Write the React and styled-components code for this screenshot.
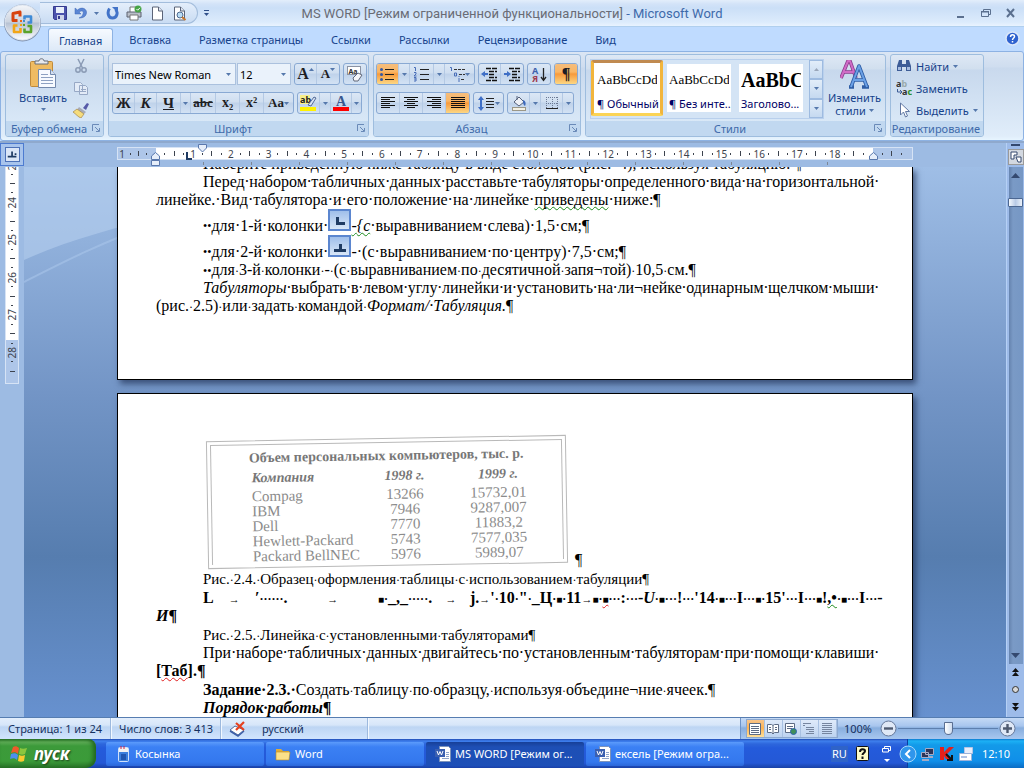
import React, { useState } from 'react';
import styled, { createGlobalStyle, css } from 'styled-components';

const GlobalStyle = createGlobalStyle`
  * {
    box-sizing: border-box;
  }

  body {
    margin: 0;
    overflow: hidden;
    font-family: 'Noto Sans', 'Open Sans', sans-serif;
    font-size: 11px;
    color: #15428b;
  }

  button {
    margin: 0;
    padding: 0;
    border: 0;
    background: none;
    font: inherit;
    color: inherit;
  }

  svg {
    display: block;
    flex: none;
  }
`;

const Wrapper = styled.div`
  display: flex;
  flex-direction: column;
  height: 100vh;
  background: #bfdbff;
`;

/* ---------- title bar ---------- */

const TitleBar = styled.header`
  display: grid;
  grid-template-columns: 1fr auto 1fr;
  align-items: center;
  height: 27px;
  flex: none;
  background: linear-gradient(#e3eefb 0, #d3e3f8 4px, #cbdff7 8px, #dcebfc 22px, #e9f3ff 26px);
  border-bottom: 1px solid #b0cfee;
`;

const QuickAccess = styled.div`
  display: flex;
  align-items: center;
  justify-self: start;
  gap: 7px;
  height: 22px;
  margin-left: 40px;
  padding: 0 10px 0 13px;
  border: 1px solid #a3bddc;
  border-left: 0;
  border-radius: 0 11px 11px 0;
  background: linear-gradient(#e4eefb, #c9dcf3);
`;

const QuickAccessArea = styled.div`
  display: flex;
  align-items: center;
  gap: 6px;
`;

const Title = styled.h1`
  margin: 0;
  font-family: Roboto, 'Noto Sans', sans-serif;
  font-size: 13px;
  font-weight: normal;
  white-space: nowrap;
  color: #3e6aaa;

  span {
    color: #696c75;
  }
`;

const WindowButtons = styled.div`
  display: flex;
  justify-self: end;
  align-items: center;
  gap: 14px;
  padding-right: 7px;
`;

const OfficeButton = styled.button`
  position: absolute;
  z-index: 2;
  top: 3px;
  left: 3px;
`;

/* ---------- tabs ---------- */

const Tabs = styled.nav`
  display: flex;
  align-items: flex-end;
  height: 24px;
  flex: none;
  padding: 0 4px 0 48px;
  background: #bfdbff;
`;

const Tab = styled.button`
  height: 23px;
  padding: 0 ${(p) => (p.$active ? '10px' : '14px')};
  margin-right: ${(p) => (p.$active ? '2px' : '0')};
  font-size: 11px;
  color: #15428b;

  ${(p) =>
    p.$active &&
    css`
      border: 1px solid #8db2e3;
      border-bottom: 0;
      border-radius: 3px 3px 0 0;
      background: linear-gradient(#f6faff, #dde9f7);
    `}
`;

const HelpButton = styled.button`
  margin: 0 0 5px auto;
`;

/* ---------- ribbon ---------- */

const Ribbon = styled.section`
  display: flex;
  gap: 4px;
  flex: none;
  height: 90px;
  padding: 2px 4px 3px;
  border: 1px solid #8db2e3;
  border-radius: 3px;
  background: linear-gradient(#dbe6f4 0, #cfddef 15px, #c9d9ed 16px, #e0edfa 84px, #e7f5ff 88px);
`;

const Group = styled.div`
  display: flex;
  flex-direction: column;
  width: ${(p) => p.$width}px;
  border: 1px solid #9ebdde;
  border-radius: 3px;
  background: linear-gradient(#dee8f5 0, #d1dfee 14px, #c7d8ed 15px, #d9e8f7 68px);
  overflow: hidden;
`;

const GroupBody = styled.div`
  display: flex;
  flex: 1;
  padding: ${(p) => p.$pad || '0'};
  gap: 3px;
`;

const GroupLabel = styled.div`
  display: flex;
  align-items: center;
  justify-content: center;
  height: 15px;
  padding-right: 2px;
  background: #c1d8f0;
  color: #3e6aaa;
  white-space: nowrap;

  span {
    flex: 1;
    text-align: center;
  }
`;

const Rows = styled.div`
  display: flex;
  flex-direction: column;
  gap: 7px;
`;

const Row = styled.div`
  display: flex;
  gap: 3px;
`;

const ComboPair = styled.div`
  display: flex;
  gap: 1px;
`;

const ToolGroup = styled.div`
  display: flex;
  height: 22px;
  border: 1px solid #89a9d3;
  border-radius: 3px;
  background: linear-gradient(#dbe7f5 0, #cfdef0 9px, #bfd2ea 10px, #d3e2f4 20px);
  overflow: hidden;
`;

const Tool = styled.button`
  display: flex;
  align-items: center;
  justify-content: center;
  width: ${(p) => p.$width || 22}px;
  border-right: 1px solid #b4c9e4;
  font-family: 'Liberation Serif', serif;
  font-size: ${(p) => p.$size || 14}px;
  font-weight: bold;
  line-height: 18px;
  color: #1e1e24;

  &:last-child {
    border-right: 0;
  }

  ${(p) =>
    p.$raised &&
    css`
      svg {
        align-self: flex-start;
        margin-top: 4px;
      }
    `}

  ${(p) =>
    p.$on &&
    css`
      background: linear-gradient(#f5bd7c 0, #f9b665 8px, #f79a3c 10px, #fdd783 20px);
    `}
`;

const BigButton = styled.button`
  display: flex;
  flex-direction: column;
  align-items: center;
  width: ${(p) => p.$width}px;
  padding-top: ${(p) => p.$top}px;
  line-height: 13px;

  > span {
    padding: 2px 0 4px;
  }
`;

const MenuLine = styled.i`
  display: flex;
  align-items: center;
  justify-content: center;
  gap: 3px;
  font-style: normal;
`;

const IconColumn = styled.div`
  display: flex;
  flex-direction: column;
  align-items: center;
  gap: 6px;
  padding-top: 3px;
  margin-left: -10px;
`;

const ComboBox = styled.label`
  display: flex;
  align-items: center;
  width: ${(p) => p.$width}px;
  height: 22px;
  padding-right: 4px;
  border: 1px solid #abc1de;
  background: #eaf2fb;

  select {
    flex: 1;
    min-width: 0;
    padding: 0 2px;
    border: 0;
    appearance: none;
    background: none;
    font: inherit;
    color: #000;
  }
`;

const Gallery = styled.div`
  display: flex;
  height: 60px;
  border: 1px solid #b9d0ed;
  background: #d4e4f5;
`;

const StyleTile = styled.button`
  display: flex;
  flex-direction: column;
  justify-content: space-between;
  width: 72px;
  height: 56px;
  padding: 7px 2px 0;
  border: 4px solid transparent;
  background: #fff;
  background-clip: padding-box;
  color: #000066;
  text-align: left;
  white-space: nowrap;
  overflow: hidden;

  b {
    display: flex;
    align-items: center;
    height: 18px;
    font-family: 'Liberation Serif', serif;
    font-size: ${(p) => (p.$heading ? '20px' : '13px')};
    font-weight: ${(p) => (p.$heading ? 'bold' : 'normal')};
    color: #000;
    overflow: hidden;
  }

  span {
    line-height: 16px;
  }

  ${(p) =>
    p.$on &&
    css`
      border: 3px solid #f2b53c;
      border-top-color: #c08a50;
      border-bottom-color: #fbd456;
      border-radius: 2px;
      padding: 8px 3px 1px;
    `}
`;

const GalleryScroll = styled.div`
  display: flex;
  flex-direction: column;
  width: 14px;
  margin-left: 2px;

  button {
    display: flex;
    flex: 1;
    align-items: center;
    justify-content: center;
    border: 1px solid #9ebbe0;
    background: linear-gradient(#e2edf9, #c5d9f0);
  }
`;

const EditList = styled.div`
  display: flex;
  flex-direction: column;
  gap: 4px;

  button {
    display: flex;
    align-items: center;
    gap: 4px;
    height: 18px;
    white-space: nowrap;
  }
`;

/* ---------- workspace ---------- */

const Workspace = styled.main`
  display: flex;
  flex: 1;
  min-height: 0;
  border-top: 2px solid #8fa9cd;
  background: #9dbbe3;
`;

const LeftRail = styled.div`
  display: flex;
  flex-direction: column;
  align-items: center;
  width: 24px;
  background: #9dbbe3;
`;

const TabSelector = styled.button`
  display: flex;
  align-items: center;
  justify-content: center;
  width: 24px;
  height: 23px;
  margin-bottom: 1px;
  border: 1px solid #4d7bd0;
  background: #a8c4ec;

  svg {
    border: 1px solid #4d72b8;
    background: #dbe6f7;
  }
`;

const VerticalRuler = styled.div`
  display: flex;
  flex-direction: column;
  width: 14px;
  height: 217px;
  padding-bottom: 7px;
  border: 1px solid #d6e3f5;
  border-top: 0;
  background: linear-gradient(#fff 173px, #aec6e9 173px);
  overflow: hidden;

  > :first-child {
    margin-top: -7px;
  }
`;

const Center = styled.div`
  display: flex;
  flex-direction: column;
  flex: 1;
  min-width: 0;
`;

const HorizontalRuler = styled.div`
  position: relative;
  width: 796px;
  height: 24px;
  margin: 0 auto;
  padding-top: 4px;
`;

const RulerBar = styled.div`
  display: flex;
  height: 13px;
  border: 1px solid #d6e3f5;
  background: #aec6e9;
`;

const RulerPart = styled.div`
  display: flex;
  flex: ${(p) => (p.$width ? `0 0 ${p.$width}px` : '1')};
  padding: ${(p) => p.$pad};
  background: ${(p) => (p.$page ? '#fff' : '#aec6e9')};
`;

const Mark = styled.span`
  display: flex;
  flex: 1 1 0;
  min-width: 0;
  min-height: 0;
  align-items: center;
  justify-content: center;
  font-size: 10px;
  line-height: 10px;
  color: #3d434e;
  white-space: nowrap;

  ${(p) =>
    p.$vertical &&
    css`
      writing-mode: vertical-rl;
      rotate: 180deg;
    `}
`;

const Tick = styled.i`
  width: ${(p) => (p.$vertical ? p.$size : 1)}px;
  height: ${(p) => (p.$vertical ? 1 : p.$size)}px;
  background: #3d434e;
`;

const TabStops = styled.div`
  height: 3px;
  margin: 2px 40px 0 86px;
  background: repeating-linear-gradient(90deg, #7d8796 0, #7d8796 1px, transparent 1px, transparent 48px);
`;

const Pin = styled.span`
  position: absolute;
  left: ${(p) => p.$x}px;
  top: ${(p) => p.$y}px;
`;

const Canvas = styled.div`
  position: relative;
  display: flex;
  flex-direction: column;
  align-items: center;
  flex: 1;
  gap: 13px;
  overflow: hidden;
  background: linear-gradient(#9fbee6 0, #7395c6 225px, #567daf 390px, #6791cf 550px);
`;

const Swoosh = styled.svg`
  position: absolute;
  top: 0;
  left: 0;
`;

const Page = styled.article`
  position: relative;
  width: 796px;
  height: ${(p) => p.$height};
  flex: ${(p) => (p.$height ? 'none' : '1')};
  padding: ${(p) => (p.$height ? '0 36px 0 38px' : '39px 36px 0 38px')};
  border: 1px solid #000;
  border-top-width: ${(p) => (p.$height ? '0' : '1px')};
  background: #fff;
  box-shadow: 3px 4px 6px rgba(20, 35, 70, 0.6);
  font-family: 'Liberation Serif', 'Times New Roman', serif;
  font-size: 16px;
  line-height: 18px;
  color: #000;
  white-space: nowrap;
`;

const Shift = styled.div`
  margin-top: -12px;
`;

const Paragraph = styled.p`
  margin: 0 0 ${(p) => (p.$spaced ? '1px' : '0')};
  font-size: ${(p) => (p.$caption ? '15px' : '16px')};
  font-weight: ${(p) => (p.$bold ? 'bold' : 'normal')};
`;

const Line = styled.span`
  display: flex;
  align-items: baseline;
  justify-content: ${(p) => (p.$justify ? 'space-between' : 'flex-start')};
  height: 18px;
  padding-left: ${(p) => (p.$indent ? '47px' : '0')};
  margin-right: ${(p) => (p.$justify ? '-3px' : '0')};
  white-space: pre;

  > * {
    flex: none;
  }
`;

const PictureLine = styled(Line)`
  align-items: flex-end;
  height: 26px;

  svg {
    align-self: flex-start;
  }
`;

const Dot = styled.span`
  font-size: 12px;
`;

const Square = styled.span`
  font-size: 10px;
`;

const Arrow = styled.span`
  font-size: 11px;
`;

const Bullets = styled.span`
  font-size: 12px;
`;

const FlexDot = styled.span`
  display: flex;
  justify-content: center;
  flex: 0 1 auto !important;
  min-width: 0;
`;

const Wavy = styled.span`
  text-decoration: underline wavy ${(p) => p.$color || '#1c8a1c'} 1px;
  text-decoration-skip-ink: none;
`;

const TabCell = styled.span`
  display: flex;
  align-items: baseline;
  width: ${(p) => p.$width}px;

  > :last-child {
    flex: 1;
    text-align: center;
  }
`;

const Figure = styled.div`
  display: flex;
  align-items: flex-end;
  gap: 8px;
  height: 136px;
  padding-left: 51px;
  margin-bottom: 1px;
`;

const Scan = styled.div`
  width: 360px;
  height: 128px;
  margin-bottom: 3px;
  padding: 3px;
  border: 1px solid #b9b9b9;
  rotate: -1deg;
`;

const ScanTable = styled.table`
  width: 100%;
  border: 1px solid #b9b9b9;
  border-bottom: 0;
  border-collapse: separate;
  border-spacing: 0;
  table-layout: fixed;
  font-size: 15px;
  line-height: 15px;
  color: #8b8b8b;

  caption {
    padding: 6px 0 0;
    margin-bottom: -21px;
    font-size: 14px;
    font-weight: bold;
    color: #777;
  }

  th,
  td {
    padding: 0;
    font-weight: normal;
    text-align: center;
  }

  th:first-child {
    width: 163px;
    padding-left: 40px;
    text-align: left;
  }

  thead th {
    width: 60px;
    padding-top: 25px;
    padding-bottom: 4px;
    font-size: 14px;
    font-weight: bold;
    font-style: italic;
    color: #777;
  }

  thead th:last-child {
    width: auto;
  }
`;

const ScrollBar = styled.div`
  display: flex;
  flex-direction: column;
  align-items: center;
  width: 18px;
  border-left: 1px solid #b5d0f5;
  background: #9dbbe9;
`;

const ScrollTrack = styled.div`
  display: flex;
  flex-direction: column;
  align-items: center;
  flex: 1;
  width: 14px;
  margin-bottom: 4px;
  padding: 6px 0;
  background: linear-gradient(90deg, #6583ae, #7a9ac6 4px, #7697c4);
`;

const ScrollThumb = styled.div`
  width: 15px;
  height: 9px;
  margin: 20px 0 auto;
  border: 1px solid #4c6791;
  border-radius: 1px;
  background: linear-gradient(90deg, #f4f8fd, #b9cbe6, #eaf1fa);
`;

const RulerToggle = styled.button`
  display: flex;
  align-items: center;
  justify-content: center;
  width: 16px;
  height: 16px;
  margin: 2px 0;
  border: 1px solid #9a9a9a;
  background: #d3d8e0;
`;

const BrowseButtons = styled.div`
  display: flex;
  flex-direction: column;
  align-items: center;
  gap: 8px;
  padding-bottom: 6px;
`;

/* ---------- status bar ---------- */

const StatusBar = styled.footer`
  display: flex;
  align-items: stretch;
  height: 22px;
  flex: none;
  border-top: 1px solid #567db1;
  background: linear-gradient(#e3eefc 0, #d7e6f9 7px, #bdd5f3 9px, #cfe3fd 20px);
  color: #15315f;
  white-space: nowrap;
`;

const StatusItem = styled.span`
  display: flex;
  align-items: center;
  gap: 16px;
  padding: 0 8px;
  border-right: 1px solid #9db9de;
  box-shadow: 1px 0 #f2f8ff;
  width: ${(p) => p.$width}px;
`;

const StatusRight = styled.div`
  display: flex;
  align-items: center;
  gap: 6px;
  margin-left: auto;
  padding: 0 8px 0 5px;
  border-left: 1px solid #6f94c8;
  background: linear-gradient(#c5daf5 0, #a8c6ee 8px, #88aede 10px, #a5c5ee 20px);
`;

const ViewButtons = styled.div`
  display: flex;
  height: 19px;
  border: 1px solid #8ca8cf;
  background: linear-gradient(#dfeafa, #bdd3f0);

  button {
    display: flex;
    align-items: center;
    justify-content: center;
    width: 18px;
    border-right: 1px solid #a9c1e2;
  }

  button:first-child {
    background: linear-gradient(#f8c48a, #fdb353 8px, #ffe09a);
  }
`;

const Zoom = styled.label`
  display: flex;
  align-items: center;
  gap: 8px;
`;

const ZoomSlider = styled.input`
  width: 100px;
  height: 16px;
  margin: 0 -7px;
  appearance: none;
  background: linear-gradient(#5d7fae, #5d7fae) center / 100% 1px no-repeat;

  &::-webkit-slider-thumb {
    appearance: none;
    width: 9px;
    height: 13px;
    border: 1px solid #5b6f92;
    border-radius: 1px 1px 5px 5px;
    background: linear-gradient(90deg, #fff, #cfdcee);
  }
`;

/* ---------- taskbar ---------- */

const TaskBar = styled.div`
  display: flex;
  align-items: center;
  height: 29px;
  flex: none;
  background: linear-gradient(#1f4bb4 0, #3f80ee 2px, #2d66dc 5px, #245bdb 9px, #2458d6 24px, #1941a5 29px);
  color: #fff;
  font-size: 11px;
`;

const StartButton = styled.button`
  display: flex;
  align-items: center;
  gap: 5px;
  width: 96px;
  height: 29px;
  margin-right: 10px;
  padding-left: 10px;
  border-radius: 0 8px 10px 0;
  background: linear-gradient(#2c7a2b 0, #5eac56 3px, #3c9a3a 7px, #3b9b39 22px, #2a752a 29px);
  box-shadow: inset -3px 0 4px #22661f;
  color: #fff;
  font-size: 17px;
  font-weight: bold;
  font-style: italic;
  text-shadow: 1px 1px 2px #1b3c1a;
`;

const TaskButton = styled.button`
  display: flex;
  align-items: center;
  gap: 4px;
  flex: 0 1 158px;
  min-width: 0;
  height: 24px;
  margin-right: 2px;
  padding: 0 9px;
  border-radius: 2px;
  background: ${(p) =>
    p.$on ? 'linear-gradient(#173f97, #1e4fb5 5px, #1d4fb7)' : 'linear-gradient(#5c9bfb, #3b80f4 5px, #3478ee 20px, #2b67d9)'};
  white-space: nowrap;
`;

const Language = styled.span`
  margin-left: auto;
  padding: 0 1px;
  background: #2f63c8;
  line-height: 16px;
`;

const TrayTools = styled.div`
  display: flex;
  align-items: center;
  gap: 13px;
  padding: 0 16px 0 8px;
`;

const Tray = styled.div`
  display: flex;
  align-items: center;
  gap: 3px;
  height: 29px;
  padding-right: 14px;
  border-left: 1px solid #0a3fa0;
  background: linear-gradient(#0d79cf 0, #1cb1f5 2px, #139ae9 6px, #108fe9 22px, #0b6cc4 29px);

  > button {
    margin-left: -9px;
  }

  time {
    padding-left: 5px;
  }
`;

/* ---------- icons ---------- */

function Svg({ w = 16, h = 16, children, ...rest }) {
  return (
    <svg width={w} height={h} viewBox={`0 0 ${w} ${h}`} aria-hidden="true" {...rest}>
      {children}
    </svg>
  );
}

function Caret({ color = '#5578ac', up }) {
  return (
    <Svg w={5} h={3}>
      <path d={up ? 'M0 3h5L2.500 0z' : 'M0 0h5L2.500 3z'} fill={color} />
    </Svg>
  );
}

function Launcher() {
  return (
    <Svg w={9} h={9} fill="none" stroke="#6a8ab8">
      <path d="M.5 7V.5H7M3 3l4 4M4 7.500h3.500V4" />
    </Svg>
  );
}

function OfficeLogo() {
  return (
    <Svg w={40} h={40}>
      <defs>
        <linearGradient id="orb" x1="0" y1="0" x2="0" y2="1">
          <stop offset="0" stopColor="#f4f6fa" />
          <stop offset=".48" stopColor="#ccd4e0" />
          <stop offset=".52" stopColor="#b7c2d3" />
          <stop offset="1" stopColor="#fdfdff" />
        </linearGradient>
      </defs>
      <circle cx="19.500" cy="20" r="18.500" fill="#8193b0" />
      <circle cx="19.500" cy="19.500" r="17.500" fill="url(#orb)" stroke="#dfe6f0" />
      <g fill="none" strokeLinejoin="round">
        <path d="M14.500 17.500H10V10.500l7-1.500v4.500" stroke="#d8430e" strokeWidth="3" />
        <path d="M21.500 16.500v-3h6.500v6h-3.500" stroke="#3f8bd6" strokeWidth="2.600" />
        <path d="M14.500 22.500H11V29h6.500v-4" stroke="#f2a516" strokeWidth="2.600" />
        <path d="M21.500 25.500V29H28v-6h-3.500" stroke="#5ba32b" strokeWidth="2.600" />
      </g>
      <g fill="#e8671a">
        <rect x="17" y="17" width="2" height="2" />
        <rect x="20" y="17" width="2" height="2" fill="#3f8bd6" />
        <rect x="17" y="21" width="2" height="2" fill="#f2a516" />
        <rect x="20" y="21" width="2" height="2" fill="#5ba32b" />
      </g>
    </Svg>
  );
}

function SaveIcon() {
  return (
    <Svg w={14} h={14}>
      <path d="M.5.5h13v13h-12l-1-1z" fill="#4b52ad" stroke="#353a8e" />
      <rect x="3" y="1" width="8" height="6" fill="#e9effa" />
      <rect x="4" y="9" width="7" height="5" fill="#cdd3ea" />
      <rect x="5" y="10" width="2" height="3" fill="#353a8e" />
    </Svg>
  );
}

function UndoIcon() {
  return (
    <Svg w={13} h={14}>
      <path d="M1 2v6h6L5 6c3-2 5-1 4 2-.5 2-2 3-4 4 5 0 7-2 7.500-5C13 3 8 0 3.500 4z" fill="#5b86d4" stroke="#3f67b5" strokeWidth=".5" />
    </Svg>
  );
}

function RedoIcon() {
  return (
    <Svg w={13} h={14}>
      <path d="M3.500 2.500C1 6 2 12 6.500 12s6-6 3-8.500" fill="none" stroke="#4273c8" strokeWidth="3" />
      <path d="M6 1h6v6z" fill="#4273c8" />
    </Svg>
  );
}

function PrintIcon() {
  return (
    <Svg w={17} h={16}>
      <path d="M4 7V2h7v5" fill="#fff" stroke="#777" />
      <path d="M1 7h14v5H1z" fill="#b9bec8" stroke="#5d6270" />
      <path d="M4 10h8v5H4z" fill="#fff" stroke="#777" />
      <circle cx="12" cy="4" r="3.500" fill="#48a546" />
      <path d="M10.500 4l1.200 1.200L14 2.800" stroke="#fff" fill="none" />
    </Svg>
  );
}

function PageIcon({ lens }) {
  return (
    <Svg w={15} h={15}>
      <path d="M2.500 1h6l4 4v9h-10z" fill="#fff" stroke="#5b6478" />
      <path d="M8.500 1v4h4" fill="#dfe6f2" stroke="#5b6478" />
      {lens && (
        <g>
          <circle cx="8" cy="9" r="3" fill="#b9dcf5" stroke="#4f6a90" />
          <path d="M10 11l3.500 3" stroke="#c5762c" strokeWidth="2" />
        </g>
      )}
    </Svg>
  );
}

function PasteIcon() {
  return (
    <Svg w={28} h={31}>
      <rect x="1.500" y="3.500" width="22" height="25" rx="1" fill="#efbb62" stroke="#c08a3a" />
      <path d="M6 6V3h4c0-3 5-3 5 0h4v3z" fill="#e7e9ee" stroke="#666c78" />
      <path d="M9.500 11.500h12l5 5v13h-17z" fill="#f7faff" stroke="#7389ad" />
      <path d="M21.500 11.500v5h5" fill="#d5e0f1" stroke="#7389ad" />
      <path d="M12 16.500h7M12 19.500h12M12 22.500h12M12 25.500h12" stroke="#8ea1c2" />
    </Svg>
  );
}

function CutIcon() {
  return (
    <Svg fill="none" stroke="#8b9bb5">
      <path d="M5 1l4.500 9M11 1L6.500 10" strokeWidth="1.500" />
      <circle cx="5" cy="12" r="2.200" strokeWidth="1.500" />
      <circle cx="11" cy="12" r="2.200" strokeWidth="1.500" />
    </Svg>
  );
}

function CopyIcon() {
  return (
    <Svg stroke="#97a8c5" fill="#e3ebf7">
      <path d="M1.500 2.500h6l2 2v7h-8zM6.500 5.500h6l2 2v7h-8z" />
      <path d="M8 9.500h5M8 11.500h5" />
    </Svg>
  );
}

function BrushIcon() {
  return (
    <Svg>
      <path d="M10 6l4-5 2 1-3 6z" fill="#565aa8" />
      <path d="M6 5l7 5-2 2-7-4z" fill="#a7abb8" />
      <path d="M4 7l7 5-3 4C5 15 3 12 0 10z" fill="#f5dc7c" stroke="#a3854a" strokeWidth=".7" />
    </Svg>
  );
}

function EraserIcon() {
  return (
    <Svg w={18}>
      <rect x="1.500" y=".5" width="13" height="8" fill="#fff" stroke="#8c94a4" />
      <text x="2.500" y="7.500" fontSize="7" fontWeight="bold" fontFamily="Noto Sans" fill="#333">
        Aa
      </text>
      <path d="M7 12l5-5 4 2-4 6H8z" fill="#f5f6fa" stroke="#60687a" />
    </Svg>
  );
}

function LinesIcon({ rows, color = '#111' }) {
  return (
    <Svg w={14} h={14} stroke={color}>
      {rows.map(([from, to], i) => (
        <path key={i} d={`M${from} ${i * 2 + 1.5}H${to}`} />
      ))}
    </Svg>
  );
}

const alignments = {
  'По левому краю': [[0, 14], [0, 9], [0, 14], [0, 9], [0, 14], [0, 9]],
  'По центру': [[0, 14], [3, 11], [0, 14], [3, 11], [0, 14], [3, 11]],
  'По правому краю': [[0, 14], [5, 14], [0, 14], [5, 14], [0, 14], [5, 14]],
  'По ширине': [[0, 14], [0, 14], [0, 14], [0, 14], [0, 14], [0, 14]],
};

function ListIcon({ kind }) {
  return (
    <Svg w={15} h={15}>
      {kind === 'bullets' && (
        <g>
          <g fill="#3559a5">
            <circle cx="1.500" cy="2.500" r="1.500" />
            <circle cx="1.500" cy="7.500" r="1.500" />
            <circle cx="1.500" cy="12.500" r="1.500" />
          </g>
          <path d="M5 2.500h9M5 7.500h9M5 12.500h9" stroke="#222" />
        </g>
      )}
      {kind === 'numbers' && (
        <g>
          <path d="M0 .5h1.500V4M0 5.500h2v1.500L0 9h2.500M0 10.500h2V14H0M0 12h2" fill="none" stroke="#4a6fb8" />
          <path d="M6 2.500h9M6 7.500h9M6 12.500h9" stroke="#222" />
        </g>
      )}
      {kind === 'levels' && (
        <g>
          <path d="M0 .5h1.500V4M4.500 6h2v3h-2zM9 11v4M9 9v1" fill="none" stroke="#4a6fb8" />
          <path d="M4 2.500h11M9 7.500h6M11 12.500h4" stroke="#333" strokeDasharray="3 1" />
        </g>
      )}
    </Svg>
  );
}

function IndentIcon({ right }) {
  return (
    <Svg w={17} h={15}>
      <path d="M5 1.500h11M8 4.500h8M8 7.500h5M8 10.500h8M5 13.500h11" stroke="#111" strokeWidth="1.500" strokeDasharray="5 1" />
      <path d={right ? 'M7 7L3 4v2H0v2h3v2z' : 'M0 7l4-3v2h3v2H4v2z'} fill="#3f6fc6" />
    </Svg>
  );
}

function SortIcon() {
  return (
    <Svg w={15} h={17}>
      <text x="0" y="8" fontSize="9" fontWeight="bold" fontFamily="Noto Sans" fill="#3d62ad">
        A
      </text>
      <text x="0" y="16" fontSize="9" fontWeight="bold" fontFamily="Noto Sans" fill="#a03c50">
        Я
      </text>
      <path d="M11.500 2v12M9 11l2.500 3.500L14 11" fill="none" stroke="#222" strokeWidth="1.300" />
    </Svg>
  );
}

function SpacingIcon() {
  return (
    <Svg w={17} h={15}>
      <path d="M3 0L0 4h2v7H0l3 4 3-4H4V4h2z" fill="#3f6fc6" />
      <path d="M8 2.500h8M8 5.500h8M8 8.500h8M8 11.500h8" stroke="#222" />
    </Svg>
  );
}

function BucketIcon() {
  return (
    <Svg>
      <path d="M3 7l5-5 5 5-5 4z" fill="#eef1f7" stroke="#55607a" />
      <path d="M6 5V1" stroke="#55607a" />
      <path d="M12 5c3 1 3 4 2 6-2-1-2-4-2-6z" fill="#3c69bb" />
      <rect x="1.500" y="12.500" width="13" height="3" fill="#f3f0e4" stroke="#9b9787" />
    </Svg>
  );
}

function BorderIcon() {
  return (
    <Svg w={14} h={14} fill="none" stroke="#6c7a94">
      <path d="M1.500 1v12M7.500 1v12M12.500 1v12M1 1.500h12M1 7.500h12" strokeDasharray="1 1" />
      <path d="M1 12.500h12" stroke="#222" />
    </Svg>
  );
}

function HighlightIcon() {
  return (
    <Svg w={17}>
      <rect x="0" y="0" width="10" height="9" fill="#f7f08a" />
      <text x="0" y="8" fontSize="9" fontFamily="Noto Sans" fill="#222">
        ab
      </text>
      <path d="M8 10l6-8 2 1-5 8z" fill="#d8e3f5" stroke="#536b97" />
      <rect x="0" y="12" width="16" height="4" fill="#fff200" />
    </Svg>
  );
}

function FontColorIcon() {
  return (
    <Svg>
      <text x="3" y="11" fontSize="14" fontWeight="bold" fontFamily="Liberation Serif" fill="#39578f">
        A
      </text>
      <rect x="0" y="12" width="16" height="4" fill="#f00" />
    </Svg>
  );
}

function StylesIcon() {
  return (
    <Svg w={30} h={29} strokeLinejoin="round">
      <path d="M1 18L8 1h2l6 17M4 12h9" fill="none" stroke="#8c3b8f" strokeWidth="3.600" />
      <path d="M1 18L8 1h2l6 17M4 12h9" fill="none" stroke="#cf6cc6" strokeWidth="2" />
      <path d="M11 27l8-21 8 21M14 20h10M9 27h5M22 27h7" fill="none" stroke="#2e5da5" strokeWidth="3.600" />
      <path d="M11 27l8-21 8 21M14 20h10" fill="none" stroke="#6ba1e6" strokeWidth="2" />
    </Svg>
  );
}

function FindIcon() {
  return (
    <Svg>
      <path d="M1 13V8l2-6h3v4h4V2h3l2 6v5h-5V9H6v4z" fill="#3e5d97" />
      <path d="M2 9h3v3H2zM11 9h3v3h-3z" fill="#a9bfe2" />
    </Svg>
  );
}

function ReplaceIcon() {
  return (
    <Svg fontFamily="Noto Sans" fontWeight="bold" fontSize="9">
      <text x="0" y="7" fill="#333">
        a<tspan fill="#9aa">b</tspan>
      </text>
      <text x="6" y="15" fill="#333">
        a<tspan fill="#2a8f2a">c</tspan>
      </text>
      <path d="M1.500 9v3h4M4 10l2 2-2 2" fill="none" stroke="#3e5d97" />
    </Svg>
  );
}

function CursorIcon() {
  return (
    <Svg>
      <path d="M4.500 1v12l3-3 2 5 2-1-2-4.500h4z" fill="#fff" stroke="#6278a3" />
    </Svg>
  );
}

function TabMark({ kind = 'left' }) {
  return (
    <Svg w={15} h={15}>
      <path
        d={kind === 'decimal' ? 'M2 9h10v2H2zM6 4h2v5H6zM10 6h2v2h-2z' : 'M3 3h2v6h4v2H3z'}
        fill="#1f3b63"
      />
    </Svg>
  );
}

function TabPicture({ center }) {
  return (
    <Svg w={23} h={22}>
      <defs>
        <linearGradient id="tabpic" x1="0" y1="0" x2="0" y2="1">
          <stop offset="0" stopColor="#9dbdea" />
          <stop offset="1" stopColor="#dbe8f8" />
        </linearGradient>
      </defs>
      <rect x="1" y="1" width="21" height="20" fill="url(#tabpic)" stroke="#5b86cf" strokeWidth="2" />
      <path d={center ? 'M6 14h12v3H6zM11 9h3v5h-3z' : 'M8 8h3v5h6v3H8z'} fill="#1f3b63" />
    </Svg>
  );
}

function IndentMark({ kind }) {
  const stroke = '#5a78ad';
  if (kind === 'first') {
    return (
      <Svg w={9} h={9}>
        <path d="M.5.5h8V4l-4 4-4-4z" fill="#e6eefa" stroke={stroke} />
      </Svg>
    );
  }
  return (
    <Svg w={9} h={14}>
      <path d="M.5 7.500V4l4-3.500 4 3.500v3.500z" fill="#e6eefa" stroke={stroke} />
      {kind === 'left' && <path d="M.5 8.500h8v5h-8z" fill="#e6eefa" stroke={stroke} />}
    </Svg>
  );
}

function WordIcon() {
  return (
    <Svg>
      <path d="M4.500.5h9l2 2v13h-11z" fill="#fff" stroke="#7d93bb" />
      <path d="M11 6.500h3M11 8.500h3M11 10.500h3M7 12.500h7" stroke="#8da4cd" />
      <rect x="0" y="3" width="10" height="8" fill="#3a5fb0" />
      <path d="M2 5l1.500 4L5 5.500 6.500 9 8 5" fill="none" stroke="#fff" />
    </Svg>
  );
}

function RoundSign({ plus }) {
  return (
    <Svg w={17} h={17}>
      <circle cx="8.500" cy="8.500" r="7.500" fill="#dfe8f6" stroke="#67799a" />
      <path d={plus ? 'M4 8.500h9M8.500 4v9' : 'M4 8.500h9'} stroke="#4e5a70" strokeWidth="2.400" />
    </Svg>
  );
}

/* ---------- ruler ---------- */

function rulerMarks(from, to, vertical) {
  const marks = [];
  for (let q = from; q <= to; q++) {
    const rest = Math.abs(q % 4);
    marks.push(
      <Mark key={q} $vertical={vertical && rest === 0}>
        {rest === 0 ? Math.abs(q / 4) : <Tick $vertical={vertical} $size={rest === 2 ? 5 : 2} />}
      </Mark>
    );
  }
  return marks;
}

/* ---------- text ---------- */

// spreads the words and the visible spaces over the whole line
function Justified({ text, lead, indent }) {
  return (
    <Line $justify $indent={indent}>
      {lead}
      {text.split(/(·)/).filter(Boolean).map((part, i) =>
        part === '·' ? <FlexDot key={i}>·</FlexDot> : <span key={i}>{part}</span>
      )}
    </Line>
  );
}

const markKinds = { '·': Dot, '■': Square, '→': Arrow };

// formatting marks are drawn smaller than the letters round them
function Marks({ children }) {
  return (
    <span>
      {children.split(/([·■→])/).map((part, i) => {
        const Kind = markKinds[part];
        return Kind ? <Kind key={i}>{part}</Kind> : part;
      })}
    </span>
  );
}

const rows = [
  ['Compag', '13266', '15732,01'],
  ['IBM', '7946', '9287,007'],
  ['Dell', '7770', '11883,2'],
  ['Hewlett-Packard', '5743', '7577,035'],
  ['Packard BellNEC', '5976', '5989,07'],
];

const tabs = ['Главная', 'Вставка', 'Разметка страницы', 'Ссылки', 'Рассылки', 'Рецензирование', 'Вид'];

const galleryStyles = [
  { sample: 'AaBbCcDd', name: '¶ Обычный' },
  { sample: 'AaBbCcDd', name: '¶ Без инте...' },
  { sample: 'AaBbC', name: 'Заголово...', heading: true },
];

function RibbonGroup({ label, width, pad, launcher, children }) {
  return (
    <Group $width={width}>
      <GroupBody $pad={pad}>{children}</GroupBody>
      <GroupLabel>
        <span>{label}</span>
        {launcher && <Launcher />}
      </GroupLabel>
    </Group>
  );
}

function CaretTool({ label, width = 11 }) {
  return (
    <Tool aria-label={label} $width={width}>
      <Caret />
    </Tool>
  );
}

function App() {
  const [tab, setTab] = useState('Главная');
  const [style, setStyle] = useState(0);
  const [align, setAlign] = useState('По ширине');
  const [zoom, setZoom] = useState(50);

  return (
    <Wrapper>
      <GlobalStyle />
      <OfficeButton aria-label="Office">
        <OfficeLogo />
      </OfficeButton>

      <TitleBar>
        <QuickAccessArea>
          <QuickAccess>
            <button aria-label="Сохранить"><SaveIcon /></button>
            <button aria-label="Отменить"><UndoIcon /></button>
            <Caret />
            <button aria-label="Повторить"><RedoIcon /></button>
            <button aria-label="Печать"><PrintIcon /></button>
            <button aria-label="Создать"><PageIcon /></button>
            <button aria-label="Просмотр"><PageIcon lens /></button>
          </QuickAccess>
          <button aria-label="Настройка панели">
            <Svg w={5} h={7}>
              <path d="M0 .5h5" stroke="#2f4f8a" />
              <path d="M0 3h5L2.500 6z" fill="#2f4f8a" />
            </Svg>
          </button>
        </QuickAccessArea>
        <Title>
          <span>MS WORD [Режим ограниченной функциональности]</span> - Microsoft Word
        </Title>
        <WindowButtons>
          <button aria-label="Свернуть">
            <Svg w={11} h={11}><path d="M2 9h7" stroke="#5b708f" strokeWidth="2" /></Svg>
          </button>
          <button aria-label="Восстановить">
            <Svg w={11} h={11} fill="none" stroke="#5b708f">
              <path d="M3.500 3V1.500h7v5H9M1.500 4h7v4.500h-7zM1 3.500h8" />
            </Svg>
          </button>
          <button aria-label="Закрыть">
            <Svg w={12} h={11}><path d="M2 1l7 8M9 1L2 9" stroke="#5b708f" strokeWidth="2" /></Svg>
          </button>
        </WindowButtons>
      </TitleBar>

      <Tabs>
        {tabs.map((name) => (
          <Tab key={name} $active={name === tab} onClick={() => setTab(name)}>
            {name}
          </Tab>
        ))}
        <HelpButton aria-label="Справка">
          <Svg w={15} h={15}>
            <circle cx="7.500" cy="7.500" r="6.500" fill="#2f62cf" stroke="#dbe6f8" strokeWidth="1.500" />
            <path d="M5.500 6c0-3 4-3 4-.5 0 1.500-2 1.500-2 3.500M7.500 10v1.500" fill="none" stroke="#fff" strokeWidth="1.500" />
          </Svg>
        </HelpButton>
      </Tabs>

      <Ribbon>
        <RibbonGroup label="Буфер обмена" width={99} launcher>
          <BigButton $width={74} $top={3}>
            <PasteIcon />
            <span>Вставить</span>
            <Caret />
          </BigButton>
          <IconColumn>
            <button aria-label="Вырезать"><CutIcon /></button>
            <button aria-label="Копировать"><CopyIcon /></button>
            <button aria-label="Формат по образцу"><BrushIcon /></button>
          </IconColumn>
        </RibbonGroup>

        <RibbonGroup label="Шрифт" width={261} pad="8px 3px 0" launcher>
          <Rows>
            <Row>
              <ComboPair>
                <ComboBox $width={124}>
                  <select aria-label="Шрифт" defaultValue="Times New Roman">
                    <option>Times New Roman</option>
                    <option>Arial</option>
                  </select>
                  <Caret />
                </ComboBox>
                <ComboBox $width={54}>
                  <select aria-label="Размер шрифта" defaultValue="12">
                    <option>12</option>
                    <option>14</option>
                  </select>
                  <Caret />
                </ComboBox>
              </ComboPair>
              <ToolGroup>
                <Tool aria-label="Увеличить размер" $raised $size={16}>A<Caret up /></Tool>
                <Tool aria-label="Уменьшить размер" $raised $size={13}>A<Caret /></Tool>
              </ToolGroup>
              <ToolGroup>
                <Tool aria-label="Очистить формат"><EraserIcon /></Tool>
              </ToolGroup>
            </Row>
            <Row>
              <ToolGroup>
                <Tool $width={22} $size={15}>Ж</Tool>
                <Tool $width={22} $size={15}><i>К</i></Tool>
                <Tool $width={24} $size={15}><u>Ч</u></Tool>
                <CaretTool label="Подчёркивание" width={10} />
                <Tool $width={25} $size={13}><s>abc</s></Tool>
                <Tool $width={24}>x₂</Tool>
                <Tool $width={24}>x²</Tool>
                <Tool $width={29} $size={13}>Aa<Caret /></Tool>
              </ToolGroup>
              <ToolGroup>
                <Tool aria-label="Цвет выделения" $width={22}><HighlightIcon /></Tool>
                <CaretTool label="Выбор цвета выделения" />
                <Tool aria-label="Цвет текста" $width={21}><FontColorIcon /></Tool>
                <CaretTool label="Выбор цвета текста" width={9} />
              </ToolGroup>
            </Row>
          </Rows>
        </RibbonGroup>

        <RibbonGroup label="Абзац" width={208} pad="8px 2px 0" launcher>
          <Rows>
            <Row>
              <ToolGroup>
                <Tool aria-label="Маркеры" $on><ListIcon kind="bullets" /></Tool>
                <CaretTool label="Виды маркеров" />
                <Tool aria-label="Нумерация" $width={24}><ListIcon kind="numbers" /></Tool>
                <CaretTool label="Виды нумерации" />
                <Tool aria-label="Многоуровневый список" $width={29}>
                  <ListIcon kind="levels" />
                  <Caret />
                </Tool>
              </ToolGroup>
              <ToolGroup>
                <Tool aria-label="Уменьшить отступ"><IndentIcon /></Tool>
                <Tool aria-label="Увеличить отступ" $width={22}><IndentIcon right /></Tool>
              </ToolGroup>
              <ToolGroup>
                <Tool aria-label="Сортировка"><SortIcon /></Tool>
              </ToolGroup>
              <ToolGroup>
                <Tool $on $size={16}>¶</Tool>
              </ToolGroup>
            </Row>
            <Row>
              <ToolGroup>
                {Object.keys(alignments).map((name) => (
                  <Tool key={name} aria-label={name} $width={23} $on={name === align} onClick={() => setAlign(name)}>
                    <LinesIcon rows={alignments[name]} />
                  </Tool>
                ))}
              </ToolGroup>
              <ToolGroup>
                <Tool aria-label="Междустрочный интервал" $width={29}>
                  <SpacingIcon />
                  <Caret />
                </Tool>
              </ToolGroup>
              <ToolGroup>
                <Tool aria-label="Заливка"><BucketIcon /></Tool>
                <CaretTool label="Цвет заливки" />
                <Tool aria-label="Границы"><BorderIcon /></Tool>
                <CaretTool label="Виды границ" width={10} />
              </ToolGroup>
            </Row>
          </Rows>
        </RibbonGroup>

        <RibbonGroup label="Стили" width={301} pad="4px 3px 0 4px" launcher>
          <Gallery>
            {galleryStyles.map((item, i) => (
              <StyleTile key={item.name} $on={i === style} $heading={item.heading} onClick={() => setStyle(i)}>
                <b>{item.sample}</b>
                <span>{item.name}</span>
              </StyleTile>
            ))}
            <GalleryScroll>
              <button aria-label="Вверх"><Caret up color="#9aa7ba" /></button>
              <button aria-label="Вниз"><Caret /></button>
              <button aria-label="Дополнительно"><Caret /></button>
            </GalleryScroll>
          </Gallery>
          <BigButton $width={58} $top={1}>
            <StylesIcon />
            <span>
              Изменить
              <MenuLine>
                стили
                <Caret />
              </MenuLine>
            </span>
          </BigButton>
        </RibbonGroup>

        <RibbonGroup label="Редактирование" width={94} pad="2px 4px 0 5px">
          <EditList>
            <button><FindIcon />Найти<Caret /></button>
            <button><ReplaceIcon />Заменить</button>
            <button><CursorIcon />Выделить<Caret /></button>
          </EditList>
        </RibbonGroup>
      </Ribbon>

      <Workspace>
        <LeftRail>
          <TabSelector aria-label="Вид табулятора">
            <TabMark kind="decimal" />
          </TabSelector>
          <VerticalRuler>{rulerMarks(92, 114, true)}</VerticalRuler>
        </LeftRail>

        <Center>
          <HorizontalRuler>
            <RulerBar>
              <RulerPart $width={38} $pad="0 5px 0 0">
                {rulerMarks(-4, -1)}
              </RulerPart>
              <RulerPart $page $pad="0 5px 0 4px">
                {rulerMarks(1, 75)}
              </RulerPart>
              <RulerPart $width={39} $pad="0 6px 0 5px">
                {rulerMarks(77, 79)}
              </RulerPart>
            </RulerBar>
            <TabStops />
            <Pin $x={34} $y={9}><IndentMark kind="left" /></Pin>
            <Pin $x={81} $y={1}><IndentMark kind="first" /></Pin>
            <Pin $x={752} $y={9}><IndentMark kind="right" /></Pin>
            <Pin $x={66} $y={6}><TabMark /></Pin>
          </HorizontalRuler>

          <Canvas>
            <Swoosh width="100%" height="220" aria-hidden="true">
              <path d="M0 0h140v50C90 60 40 75 0 93z" fill="#b5cfef" opacity=".6" />
              <path d="M0 115C30 100 60 83 140 52" fill="none" stroke="#a9c5ea" strokeWidth="2" opacity=".6" />
            </Swoosh>

            <Page $height="213px">
              <Shift>
                <Paragraph>
                  <Line $indent>
                    <Marks>Наберите·приведенную·ниже·таблицу·в·виде·столбцов·(рис.··4),·используя·табуляцию.·¶</Marks>
                  </Line>
                </Paragraph>
                <Paragraph>
                  <Justified indent text="Перед·набором·табличных·данных·расставьте·табуляторы·определенного·вида·на·горизонтальной·" />
                  <Line>
                    линейке.·Вид·табулятора·и·его·положение·на·линейке·<Wavy>приведены</Wavy>·ниже:¶
                  </Line>
                </Paragraph>
                <Paragraph>
                  <PictureLine $indent>
                    <Bullets>••</Bullets>для·1-й·колонки·<TabPicture /><Wavy>-<i>{'{с'}</i></Wavy>·выравниванием·слева)·1,5·см;¶
                  </PictureLine>
                  <PictureLine $indent>
                    <Bullets>••</Bullets>для·2-й·колонки·<TabPicture center />-·(с·выравниванием·по·центру)·7,5·см;¶
                  </PictureLine>
                  <Line $indent>
                    <Bullets>••</Bullets>
                    <Marks>для·3-й·колонки·-·(с·выравниванием·по·десятичной·запя¬той)·10,5·см.¶</Marks>
                  </Line>
                </Paragraph>
                <Paragraph>
                  <Justified
                    indent
                    lead={<i>Табуляторы</i>}
                    text="·выбрать·в·левом·углу·линейки·и·установить·на·ли¬нейке·одинарным·щелчком·мыши·"
                  />
                  <Line>
                    <Marks>(рис.·2.5)·или·задать·командой·</Marks>
                    <i>Формат/·Табуляция.</i>¶
                  </Line>
                </Paragraph>
              </Shift>
            </Page>

            <Page>
              <Figure>
                <Scan>
                  <ScanTable>
                    <caption>Объем персональных компьютеров, тыс. р.</caption>
                    <thead>
                      <tr>
                        <th scope="col">Компания</th>
                        <th scope="col">1998 г.</th>
                        <th scope="col">1999 г.</th>
                      </tr>
                    </thead>
                    <tbody>
                      {rows.map(([name, first, second]) => (
                        <tr key={name}>
                          <th scope="row">{name}</th>
                          <td>{first}</td>
                          <td>{second}</td>
                        </tr>
                      ))}
                    </tbody>
                  </ScanTable>
                </Scan>
                ¶
              </Figure>
              <Paragraph $caption $spaced>
                <Line $indent>
                  <Marks>Рис.·2.4.·Образец·оформления·таблицы·с·использованием·табуляции¶</Marks>
                </Line>
              </Paragraph>
              <Paragraph $bold $spaced>
                <Line $indent $justify>
                  <TabCell $width={52}>L<Arrow>→</Arrow></TabCell>
                  <TabCell $width={123}><Marks>′······.</Marks><Arrow>→</Arrow></TabCell>
                  <TabCell $width={92}><Marks>■·_,_·····.</Marks><Arrow>→</Arrow></TabCell>
                  <Marks>j.→</Marks>
                  <Marks>'·10·"·_Ц·■·11→■·</Marks>
                  <Wavy $color="#e02020"><Square>■</Square></Wavy>
                  <Marks>···:···-</Marks>
                  <i>U</i>
                  <Marks>·■···!···'14·■···I···■·15'···I···■!</Marks>
                  <Wavy>,•</Wavy>
                  <Marks>·■···I···-</Marks>
                </Line>
                <Line><i>И</i>¶</Line>
              </Paragraph>
              <Paragraph $caption>
                <Line $indent>
                  <Marks>Рис.·2.5.·Линейка·с·установленными·табуляторами¶</Marks>
                </Line>
              </Paragraph>
              <Paragraph $spaced>
                <Justified indent text="При·наборе·табличных·данных·двигайтесь·по·установленным·табуляторам·при·помощи·клавиши·" />
                <Line><b>[<Wavy $color="#e02020">Таб</Wavy>].¶</b></Line>
              </Paragraph>
              <Paragraph>
                <Line $indent>
                  <b>Задание·2.3.·</b>
                  <Marks>Создать·таблицу·по·образцу,·используя·объедине¬ние·ячеек.¶</Marks>
                </Line>
              </Paragraph>
              <Paragraph $bold>
                <Line $indent><i>Порядок·работы</i>¶</Line>
              </Paragraph>
            </Page>
          </Canvas>
        </Center>

        <ScrollBar>
          <Svg w={9} h={4}><path d="M0 2h9" stroke="#34496f" strokeWidth="2" /></Svg>
          <RulerToggle aria-label="Линейка">
            <Svg w={12} h={12} fill="#fff" stroke="#34496f">
              <path d="M1 1h6v3H4v4H1zM6 6h5v5H8z" />
            </Svg>
          </RulerToggle>
          <ScrollTrack>
            <Svg w={9} h={5}><path d="M0 5h9L4.500 0z" fill="#34496f" /></Svg>
            <ScrollThumb />
            <Svg w={9} h={5}><path d="M0 0h9L4.500 5z" fill="#34496f" /></Svg>
          </ScrollTrack>
          <BrowseButtons>
            <button aria-label="Предыдущая страница">
              <Svg w={7} h={9}><path d="M0 4h7L3.500 0zM0 8h7L3.500 4z" fill="#111" /></Svg>
            </button>
            <button aria-label="Выбор объекта перехода">
              <Svg w={9} h={9}><circle cx="4.500" cy="4.500" r="3" fill="#d8d8d8" stroke="#333" /></Svg>
            </button>
            <button aria-label="Следующая страница">
              <Svg w={7} h={9}><path d="M0 1h7L3.500 5zM0 5h7L3.500 9z" fill="#111" /></Svg>
            </button>
          </BrowseButtons>
        </ScrollBar>
      </Workspace>

      <StatusBar>
        <StatusItem $width={111}>Страница: 1 из 24</StatusItem>
        <StatusItem $width={110}>Число слов: 3 413</StatusItem>
        <StatusItem $width={147}>
          <Svg w={17}>
            <path d="M1 9l5-4 9 4-6 5z" fill="#fff" stroke="#556b9b" />
            <path d="M1 10l8 5 6-5" fill="none" stroke="#3d5fa8" strokeWidth="1.500" />
            <path d="M7 2l8 7M15 1L7 9" stroke="#e5401f" strokeWidth="2.200" />
          </Svg>
          русский
        </StatusItem>
        <StatusRight>
          <ViewButtons>
            <button aria-label="Разметка страницы">
              <Svg w={12} h={12}>
                <path d="M.5.5h11v11H.5z" fill="#fff" stroke="#5d6b84" />
                <path d="M2 3.500h8M2 5.500h8M2 7.500h8M2 9.500h8" stroke="#5d6b84" />
              </Svg>
            </button>
            <button aria-label="Режим чтения">
              <Svg w={12} h={12} fill="#fff" stroke="#5d6b84">
                <path d="M.5 1.500h4l1.500 1 1.500-1h4v8h-4L6 11l-1.500-1.500h-4zM6 2.500V11M2 4.500h2M2 6.500h2M8 4.500h2M8 6.500h2" />
              </Svg>
            </button>
            <button aria-label="Веб-документ">
              <Svg w={12} h={12}>
                <path d="M.5.5h9v9h-9z" fill="#fff" stroke="#5d6b84" />
                <path d="M2 3.500h6M2 5.500h5" stroke="#5d6b84" />
                <circle cx="8.500" cy="8.500" r="3" fill="#3f8f5a" stroke="#2d62b0" />
              </Svg>
            </button>
            <button aria-label="Структура">
              <LinesIcon color="#76859f" rows={[[1, 9], [1, 3], [4, 12], [4, 12], [7, 12], [4, 12]]} />
            </button>
            <button aria-label="Черновик">
              <LinesIcon color="#76859f" rows={[[2, 12], [2, 12], [2, 12], [2, 12], [2, 12], [2, 12]]} />
            </button>
          </ViewButtons>
          <Zoom>
            <span>{zoom * 2}%</span>
            <button aria-label="Уменьшить"><RoundSign /></button>
            <ZoomSlider type="range" aria-label="Масштаб" value={zoom} onChange={(e) => setZoom(e.target.value)} />
            <button aria-label="Увеличить"><RoundSign plus /></button>
          </Zoom>
        </StatusRight>
      </StatusBar>

      <TaskBar>
        <StartButton>
          <Svg w={19} h={18}>
            <path d="M3 2c2-1 4-1 6 1L8 9C6 7 4 7 1 8z" fill="#ee5a2b" />
            <path d="M10 3c2 1 4 1 7 0l-2 6c-2 1-4 1-6 0z" fill="#8cc63e" />
            <path d="M1 9c3-1 5-1 7 1l-1 5c-2-2-4-2-7-1z" fill="#4d8ff0" />
            <path d="M9 10c2 1 4 1 6 0l-1 6c-2 1-4 1-6 0z" fill="#fbc92f" />
          </Svg>
          пуск
        </StartButton>
        <TaskButton>
          <Svg>
            <rect x="3.500" y="1.500" width="10" height="14" rx="1" fill="#3c7fdc" stroke="#cfe0fa" />
            <path d="M4 2h9v4H4z" fill="#f2f2f2" />
            <path d="M6 0v3M9 0v3" stroke="#c24" />
            <path d="M6 8h5v6H6z" fill="#2157b0" />
          </Svg>
          Косынка
        </TaskButton>
        <TaskButton>
          <Svg>
            <path d="M1 3h5l2 2h6v9H1z" fill="#e0ad3a" />
            <path d="M1 6h14l-1 8H1z" fill="#fbe08a" stroke="#b98a20" strokeWidth=".6" />
          </Svg>
          Word
        </TaskButton>
        <TaskButton $on>
          <WordIcon />
          MS WORD [Режим ог...
        </TaskButton>
        <TaskButton>
          <WordIcon />
          ексель [Режим огра...
        </TaskButton>
        <Language>RU</Language>
        <TrayTools>
          <Svg w={13} h={15}>
            <rect x=".5" y=".5" width="12" height="14" rx="1" fill="#fdfbc8" stroke="#111" />
            <path d="M4 6c0-4 5-3 5-1 0 2-2.500 2-2.500 4M6.500 10.500V13" fill="none" stroke="#111" strokeWidth="2" />
          </Svg>
          <Svg w={9} h={16} fill="none" stroke="#fff">
            <path d="M2.500 2V.5h6v4H7M.5 2.500h6V6h-6z" />
            <path d="M2 13h6l-3 3z" fill="#fff" stroke="none" />
          </Svg>
        </TrayTools>
        <Tray>
          <button aria-label="Скрытые значки">
            <Svg w={18} h={18}>
              <circle cx="9" cy="9" r="8" fill="#2f96ec" stroke="#a5d8fa" />
              <path d="M11 5L7 9l4 4" fill="none" stroke="#fff" strokeWidth="2" />
            </Svg>
          </button>
          <Svg>
            <path d="M5.500 2.500h8v6h-8zM1.500 6.500h7v5h-7z" fill="#2c3557" stroke="#a3abc6" />
            <path d="M2 14h7M8 11h5" stroke="#a3abc6" strokeWidth="2" />
          </Svg>
          <Svg>
            <path d="M1 1h4v5l5-5h5L8 8l3 5H7L5 10v4H1z" fill="#e3201b" />
            <path d="M7 8l6 6M13 9v5H8" fill="none" stroke="#111" strokeWidth="2" />
          </Svg>
          <Svg>
            <path d="M6.500 1.500h8v6h-8z" fill="#e8eefb" stroke="#b7c6e6" />
            <path d="M1.500 7.500h12v7h-12z" fill="#fff" stroke="#9cb2da" />
            <path d="M3 11h6" stroke="#5f86cc" />
          </Svg>
          <time>12:10</time>
        </Tray>
      </TaskBar>
    </Wrapper>
  );
}

export default App;
